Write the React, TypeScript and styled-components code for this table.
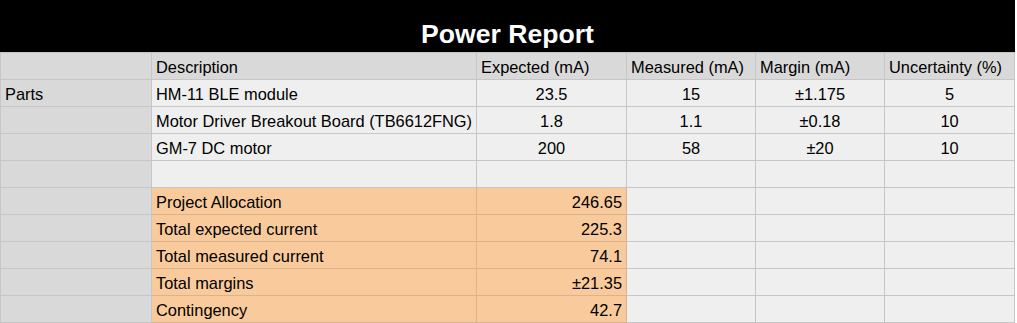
import { Fragment } from "react";
import styled, { createGlobalStyle } from "styled-components";

const GlobalStyle = createGlobalStyle`
  html, body {
    margin: 0;
    padding: 0;
    background: #ffffff;
  }
  body {
    font-family: "Liberation Sans", Arial, Helvetica, sans-serif;
  }
`;

type Tone = "head" | "side" | "body" | "orange";
type Align = "left" | "center" | "right";

const toneBg: Record<Tone, string> = {
  head: "#d9d9d9",
  side: "#d9d9d9",
  body: "#efefef",
  orange: "#f9cb9c",
};

const Report = styled.div`
  width: 1015px;
`;

const TitleBar = styled.div`
  height: 52px;
  background: #000000;
  color: #ffffff;
  display: flex;
  align-items: flex-end;
  justify-content: center;
  padding-bottom: 2px;
  box-sizing: border-box;
  font-size: 26.6px;
  font-weight: 700;
`;

const Sheet = styled.div`
  display: grid;
  grid-template-columns: 151px 325px 150px 129px 129px 130px;
  grid-auto-rows: 27px;
  border-left: 1px solid #c6c6c6;
  border-top: 1px solid #c6c6c6;
`;

const Cell = styled.div<{ $tone: Tone; $align?: Align }>`
  box-sizing: border-box;
  display: flex;
  align-items: flex-end;
  justify-content: ${(p) =>
    p.$align === "center" ? "center" : p.$align === "right" ? "flex-end" : "flex-start"};
  padding: 0 4px 3px 4px;
  background: ${(p) => toneBg[p.$tone]};
  border-right: 1px solid ${(p) => (p.$tone === "orange" ? "#dcb48c" : "#c6c6c6")};
  border-bottom: 1px solid ${(p) => (p.$tone === "orange" ? "#dcb48c" : "#c6c6c6")};
  font-size: 16.4px;
  line-height: 18px;
  color: #000000;
  white-space: nowrap;
  overflow: hidden;
`;

const headers = [
  "",
  "Description",
  "Expected (mA)",
  "Measured (mA)",
  "Margin (mA)",
  "Uncertainty (%)",
];

const parts = [
  { side: "Parts", name: "HM-11 BLE module", expected: "23.5", measured: "15", margin: "±1.175", unc: "5" },
  { side: "", name: "Motor Driver Breakout Board (TB6612FNG)", expected: "1.8", measured: "1.1", margin: "±0.18", unc: "10" },
  { side: "", name: "GM-7 DC motor", expected: "200", measured: "58", margin: "±20", unc: "10" },
  { side: "", name: "", expected: "", measured: "", margin: "", unc: "" },
];

const totals = [
  ["Project Allocation", "246.65"],
  ["Total expected current", "225.3"],
  ["Total measured current", "74.1"],
  ["Total margins", "±21.35"],
  ["Contingency", "42.7"],
];

export default function App() {
  return (
    <>
      <GlobalStyle />
      <Report>
        <TitleBar>Power Report</TitleBar>
        <Sheet>
          {headers.map((h, i) => (
            <Cell key={`h${i}`} $tone="head">
              {h}
            </Cell>
          ))}

          {parts.map((r, i) => (
            <Fragment key={`p${i}`}>
              <Cell $tone="side">{r.side}</Cell>
              <Cell $tone="body">{r.name}</Cell>
              <Cell $tone="body" $align="center">{r.expected}</Cell>
              <Cell $tone="body" $align="center">{r.measured}</Cell>
              <Cell $tone="body" $align="center">{r.margin}</Cell>
              <Cell $tone="body" $align="center">{r.unc}</Cell>
            </Fragment>
          ))}

          {totals.map(([label, value], i) => (
            <Fragment key={`t${i}`}>
              <Cell $tone="side" />
              <Cell $tone="orange">{label}</Cell>
              <Cell $tone="orange" $align="right">{value}</Cell>
              <Cell $tone="body" />
              <Cell $tone="body" />
              <Cell $tone="body" />
            </Fragment>
          ))}
        </Sheet>
      </Report>
    </>
  );
}
